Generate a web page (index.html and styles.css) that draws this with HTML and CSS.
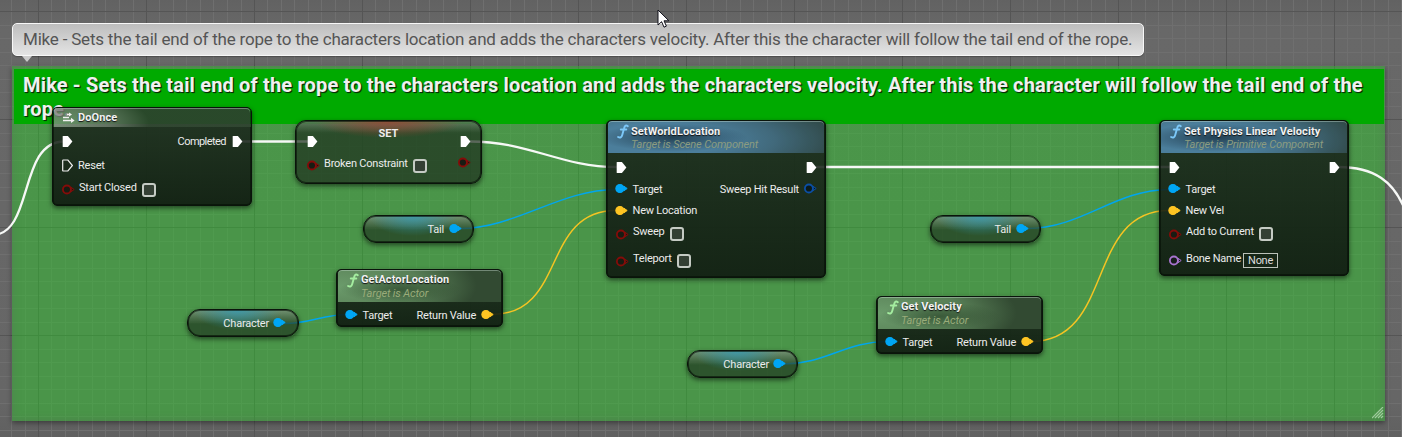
FILE: index.html
```html
<!DOCTYPE html>
<html lang="en">
<head>
<meta charset="utf-8">
<title>Blueprint graph</title>
<link rel="stylesheet" href="styles.css">
</head>
<body>
<main class="graph">
  <svg class="layer" width="1402" height="437">
    <defs>
      <pattern id="grid" x="38" y="11" width="108" height="108" patternUnits="userSpaceOnUse">
        <path class="minor" d="M13.5 0v108M27.5 0v108M40.5 0v108M54.5 0v108M67.5 0v108M81.5 0v108M95.5 0v108M0 14.5h108M0 27.5h108M0 41.5h108M0 54.5h108M0 68.5h108M0 81.5h108M0 95.5h108"/>
        <path class="major" d="M.5 0v108M0 .5h108"/>
      </pattern>
      <symbol id="exec" viewBox="0 0 11 13"><path d="M1.3 1H5.9L10.4 6.500L5.900 12H1.3Q.7 12 .7 11.400V1.600Q.7 1 1.300 1Z"/></symbol>
      <symbol id="pin" viewBox="0 0 13 11"><path class="tip" d="M9 3.300L12.200 5.500L9 7.700Z"/><circle cx="4.900" cy="5.500" r="4"/></symbol>
      <symbol id="fn" viewBox="0 0 12 15"><path d="M10.8 2.2C9.2.7 7.7 1.5 7.1 4.3L5.3 10.8C4.7 13.4 3.1 14.1 1.1 13" /><path d="M3.8 5.5H9.3"/></symbol>
    </defs>
    <rect width="1402" height="437" fill="url(#grid)"/>
  </svg>

  <section class="comment">
    <h1 class="comment-title">Mike - Sets the tail end of the rope to the characters location and adds the characters velocity. After this the character will follow the tail end of the rope.</h1>
    <svg class="grip" width="12" height="12"><path d="M0 11L11 0M3 11L11 3M6 11L11 6M9 11L11 9"/></svg>
  </section>
  <div class="bubble">Mike - Sets the tail end of the rope to the characters location and adds the characters velocity. After this the character will follow the tail end of the rope.</div>

  <svg class="layer wires" width="1402" height="437">
    <path class="w-exec" d="M-8 235C34 235 18 141.500 64 141.500"/>
    <path class="w-exec" d="M242 141.500H308"/>
    <path class="w-exec" d="M470 141.500C530 141.500 560 167 617 167"/>
    <path class="w-exec" d="M816 167H1171"/>
    <path class="w-exec" d="M1338 167C1375 167 1394 182 1405 210"/>
    <path class="w-obj" d="M460 228.500C515 228.500 560 189.500 616 189.500"/>
    <path class="w-obj" d="M1027 228.500C1082 228.500 1115 189.500 1169 189.500"/>
    <path class="w-obj" d="M285 323.500C310 323.500 323 314.500 348 314.500"/>
    <path class="w-obj" d="M784 364C825 364 846 341.500 887 341.500"/>
    <path class="w-vec" d="M492 314.500C567 314.500 541 210.500 616 210.500"/>
    <path class="w-vec" d="M1031 341.500C1115 341.500 1085 210.500 1169 210.500"/>
  </svg>

  <article class="node do-once">
    <header class="head macro">
      <svg class="macro-icon" width="13" height="12"><path class="stem" d="M5 3.500H8M1 6.500H7M1 9.500H9"/><path d="M7 1.500L10 3.500L7 5.500ZM9 6.800L12.600 9.500L9 12Z"/></svg>
      <div class="title">DoOnce</div>
    </header>
    <div class="body">
      <div class="row"><svg class="exec"><use href="#exec"/></svg><span class="label out tight">Completed</span><svg class="exec"><use href="#exec"/></svg></div>
      <div class="row"><svg class="exec hollow"><use href="#exec"/></svg><span class="label">Reset</span></div>
      <div class="row tall"><svg class="pin bool"><use href="#pin"/></svg><span class="label up">Start Closed</span><i class="check"></i></div>
    </div>
  </article>

  <article class="node set">
    <div class="set-title">SET</div>
    <div class="row"><svg class="exec"><use href="#exec"/></svg><svg class="exec out"><use href="#exec"/></svg></div>
    <div class="row tall"><svg class="pin bool"><use href="#pin"/></svg><span class="label up">Broken Constraint</span><i class="check"></i><svg class="pin bool out up"><use href="#pin"/></svg></div>
  </article>

  <article class="node world">
    <header class="head func"><svg class="fn"><use href="#fn"/></svg><div><div class="title">SetWorldLocation</div><div class="sub">Target is Scene Component</div></div></header>
    <div class="body">
      <div class="row"><svg class="exec"><use href="#exec"/></svg><svg class="exec out"><use href="#exec"/></svg></div>
      <div class="row"><svg class="pin obj"><use href="#pin"/></svg><span class="label">Target</span><span class="label out">Sweep Hit Result</span><svg class="pin struct"><use href="#pin"/></svg></div>
      <div class="row"><svg class="pin vec"><use href="#pin"/></svg><span class="label">New Location</span></div>
      <div class="row tall"><svg class="pin bool"><use href="#pin"/></svg><span class="label up">Sweep</span><i class="check"></i></div>
      <div class="row tall"><svg class="pin bool"><use href="#pin"/></svg><span class="label up">Teleport</span><i class="check"></i></div>
    </div>
  </article>

  <article class="node physics">
    <header class="head func"><svg class="fn"><use href="#fn"/></svg><div><div class="title">Set Physics Linear Velocity</div><div class="sub">Target is Primitive Component</div></div></header>
    <div class="body">
      <div class="row"><svg class="exec"><use href="#exec"/></svg><svg class="exec out"><use href="#exec"/></svg></div>
      <div class="row"><svg class="pin obj"><use href="#pin"/></svg><span class="label">Target</span></div>
      <div class="row"><svg class="pin vec"><use href="#pin"/></svg><span class="label">New Vel</span></div>
      <div class="row tall"><svg class="pin bool"><use href="#pin"/></svg><span class="label up">Add to Current</span><i class="check"></i></div>
      <div class="row bone"><svg class="pin name"><use href="#pin"/></svg><span class="label up">Bone Name</span><span class="field">None</span></div>
    </div>
  </article>

  <article class="node actor-loc">
    <header class="head pure"><svg class="fn"><use href="#fn"/></svg><div><div class="title">GetActorLocation</div><div class="sub">Target is Actor</div></div></header>
    <div class="body"><div class="row"><svg class="pin obj"><use href="#pin"/></svg><span class="label">Target</span><span class="label out">Return Value</span><svg class="pin vec"><use href="#pin"/></svg></div></div>
  </article>

  <article class="node velocity">
    <header class="head pure"><svg class="fn"><use href="#fn"/></svg><div><div class="title">Get Velocity</div><div class="sub">Target is Actor</div></div></header>
    <div class="body"><div class="row"><svg class="pin obj"><use href="#pin"/></svg><span class="label">Target</span><span class="label out">Return Value</span><svg class="pin vec"><use href="#pin"/></svg></div></div>
  </article>

  <article class="node var tail-a"><span class="label">Tail</span><svg class="pin obj"><use href="#pin"/></svg></article>
  <article class="node var tail-b"><span class="label">Tail</span><svg class="pin obj"><use href="#pin"/></svg></article>
  <article class="node var char-a"><span class="label">Character</span><svg class="pin obj"><use href="#pin"/></svg></article>
  <article class="node var char-b"><span class="label">Character</span><svg class="pin obj"><use href="#pin"/></svg></article>

  <svg class="cursor" width="14" height="20"><path d="M1 1V16L4.600 12.700L7 18.200L9.400 17.100L7 11.800H11.900Z"/></svg>
</main>
</body>
</html>
```
FILE: styles.css
```css
* { box-sizing: border-box; }
body { margin: 0; font-family: Roboto, "Liberation Sans", sans-serif; }
.graph { position: relative; width: 1402px; height: 437px; overflow: hidden; background: linear-gradient(#626262, #686868 30px, #666 400px, #606060); }
.layer { position: absolute; left: 0; top: 0; }
.minor { stroke: #6f6f6f; fill: none; }
.major { stroke: #555; fill: none; }

.comment { position: absolute; left: 12px; top: 66px; width: 1373px; height: 355px; padding: 3px 1px 0 2px; background: rgba(32, 220, 30, .4); box-shadow: 0 2px 5px rgba(0, 0, 0, .4), inset 0 0 8px rgba(90, 110, 90, .4); }
.comment-title { margin: 0; height: 55px; padding: 4px 9px 0; background: #00aa00; color: #f0f0f0; font-size: 20px; line-height: 24px; font-weight: 700; letter-spacing: .162px; text-shadow: 1px 1px 1px #063006, 1px 1px 0 #0a3a0a; }
.grip { position: absolute; right: 1px; bottom: 2px; stroke: #9fcb9d; stroke-width: 1.2; fill: none; }
.bubble { position: absolute; left: 12px; top: 23px; width: 1132px; height: 33px; padding: 0 10px; border: 1px solid #f8f8f8; border-radius: 5px; background: linear-gradient(#bdbdbd, #e4e4e4); color: #555; font-size: 17px; line-height: 31px; letter-spacing: -.198px; white-space: nowrap; box-shadow: 0 1px 1px rgba(0,0,0,.25); }
.bubble::after { content: ""; position: absolute; left: 9px; top: 32px; border: 5px solid transparent; border-top: 6px solid #ccc; border-bottom: 0; }

.wires { fill: none; }
.w-exec { stroke: #f6f8f6; stroke-width: 2.3; }
.w-obj { stroke: #00a6ee; stroke-width: 1.5; }
.w-vec { stroke: #f5c423; stroke-width: 1.5; }

.node { position: absolute; border: 1px solid #0a140b; border-radius: 5px; background: linear-gradient(rgba(27, 38, 28, .86), rgba(16, 27, 17, .92)); box-shadow: 0 2px 5px rgba(0, 0, 0, .55), inset 0 0 0 1px rgba(5, 15, 5, .6); color: #eee; }
.do-once { left: 52px; top: 107px; width: 200px; height: 99px; background: linear-gradient(transparent 19px, rgba(27, 38, 28, .88) 19px, rgba(16, 27, 17, .92)); }
.set { left: 295px; top: 120px; width: 187px; height: 64px; }
.world { left: 606px; top: 120px; width: 220px; height: 158px; }
.physics { left: 1159px; top: 120px; width: 190px; height: 156px; }
.actor-loc { left: 336px; top: 269px; width: 167px; height: 58px; }
.velocity { left: 876px; top: 296px; width: 167px; height: 58px; }

.head { display: flex; height: 32px; padding: 3px 0 0 9px; gap: 2px; margin: 0 1px; border-radius: 4px 4px 0 0; box-shadow: inset 0 1px 0 rgba(210, 230, 220, .4); }
.func { background: radial-gradient(ellipse 75px 14px at 30% 52%, rgba(20, 40, 55, .7), transparent), radial-gradient(ellipse 85% 150% at 22% 60%, #4b7e9b 35%, #41697b 65%, rgba(50, 75, 75, .9)); }
.pure { background: radial-gradient(ellipse 60px 14px at 38% 60%, rgba(35, 60, 35, .6), transparent), radial-gradient(ellipse 85% 150% at 0% 50%, #6b9b6b, #587f56 60%, #324a32); }
.macro { height: 19px; padding: 3px 0 0 8px; gap: 3px; background: radial-gradient(ellipse 95px 34px at 0% 80%, rgba(138, 142, 138, .74), rgba(100, 106, 100, .86) 60%, rgba(46, 62, 47, .9)); }
.title { height: 14px; padding-top: 1px; font-size: 11px; font-weight: 700; line-height: 14px; letter-spacing: .08px; color: #f2f2f2; white-space: nowrap; text-shadow: 0 1px 1px #111; }
.macro .title { padding-top: 0; }
.pure .title { padding-top: 0; }
.sub { height: 13px; font-size: 11px; font-style: italic; line-height: 13px; letter-spacing: -.15px; color: #8d9c7d; white-space: nowrap; }
.func .sub { color: #8b9c80; }
.pure .sub { color: #9aac7a; }
.fn { width: 12px; height: 15px; fill: none; stroke: #7cc8f8; stroke-width: 1.9; stroke-linecap: round; }
.pure .fn { stroke: #a4eda0; }
.macro-icon { fill: #f0f0f0; }
.stem { stroke: #f0f0f0; stroke-width: 1.3; }

.body { padding-top: 3px; }
.row { display: flex; align-items: center; height: 22px; padding: 0 8px 0 9px; }
.row:nth-child(3) { height: 21px; }
.row.tall { height: 27px; }
.do-once .body { padding-top: 2px; }
.do-once .row { height: 24px; }
.do-once .row.tall { height: 26px; }
.actor-loc .body, .velocity .body { padding-top: 2px; }
.exec { flex: none; width: 11px; height: 13px; fill: #fff; }
.hollow { fill: none; stroke: #eee; stroke-width: 1.2; }
.pin { flex: none; width: 13px; height: 11px; margin-left: -1px; margin-bottom: 1px; stroke-width: 1.8; }
.tip { stroke-width: 1; stroke-linejoin: round; }
.obj { fill: #00a6f4; stroke: #00a6f4; stroke-width: 1.2; }
.vec { fill: #fec523; stroke: #fec523; stroke-width: 1.2; }
.bool { margin-left: 0; margin-right: -1px; fill: #181c13; stroke: #850c09; }
.struct { fill: #0c1b1c; stroke: #0b4fa6; }
.name { margin-left: 0; margin-right: -1px; fill: #171c1c; stroke: #a974d0; }
.label { margin-left: 4.500px; padding-top: 1px; font-size: 11px; line-height: 14px; letter-spacing: -.22px; color: #ececec; white-space: nowrap; }
.tight { letter-spacing: -.55px; }
.exec + .label { margin-left: 5px; }
.out { margin-left: auto !important; }
.label.out { margin-right: 6px; }
.label.up { margin-left: 5px; margin-bottom: 5px; padding-top: 0; }
.do-once .label.up { margin-bottom: 4px; }
.pin.up { margin-right: 0; margin-bottom: 6px; }
.check { flex: none; width: 14px; height: 14px; margin-left: 5px; margin-bottom: 1px; border: 2px solid #c5cbc4; border-radius: 3px; background: #344034; }
.row.bone { height: 26px; }
.bone .pin { margin-bottom: 2px; }
.bone .label.up { margin-bottom: 5px; }
.field { margin: 0 0 2px 2px; height: 15px; padding: 0 4px; border: 1px solid #bbc2b9; font-size: 11px; line-height: 14px; letter-spacing: -.3px; color: #ddd; }

.set { padding-top: 5px; border-radius: 11px; background: radial-gradient(ellipse 75px 17px at 50% 0, rgba(160, 65, 52, .8), transparent), linear-gradient(rgba(150, 175, 150, .5), transparent 12px), rgba(32, 50, 32, .73); }
.set-title { height: 4px; padding-top: 1px; text-align: center; font-size: 11px; font-weight: 700; line-height: 14px; }
.set .row { padding: 0 10px 0 11px; }
.set .row.tall { padding-right: 10px; }
.set .label.up { margin-bottom: 4px; }
.set .check { margin-left: 5px; margin-bottom: 0; }
.var { display: flex; align-items: center; justify-content: flex-end; width: 111px; height: 28px; padding: 0 11px 0 0; border-radius: 13px; background: radial-gradient(ellipse 44px 20px at 45% 0, rgba(50, 155, 185, .75), transparent), linear-gradient(rgba(170, 195, 170, .55), transparent 14px), rgba(35, 60, 35, .72); }
.var .pin { margin-left: 4px; }
.tail-a .label, .tail-b .label { margin-right: 1px; }
.tail-a { left: 363px; top: 215px; }
.tail-b { left: 930px; top: 215px; }
.char-a { left: 187px; top: 309px; width: 112px; padding-right: 12px; }
.char-b { left: 687px; top: 350px; }
.cursor { position: absolute; left: 657px; top: 9px; fill: #fff; stroke: #11111b; }
```
